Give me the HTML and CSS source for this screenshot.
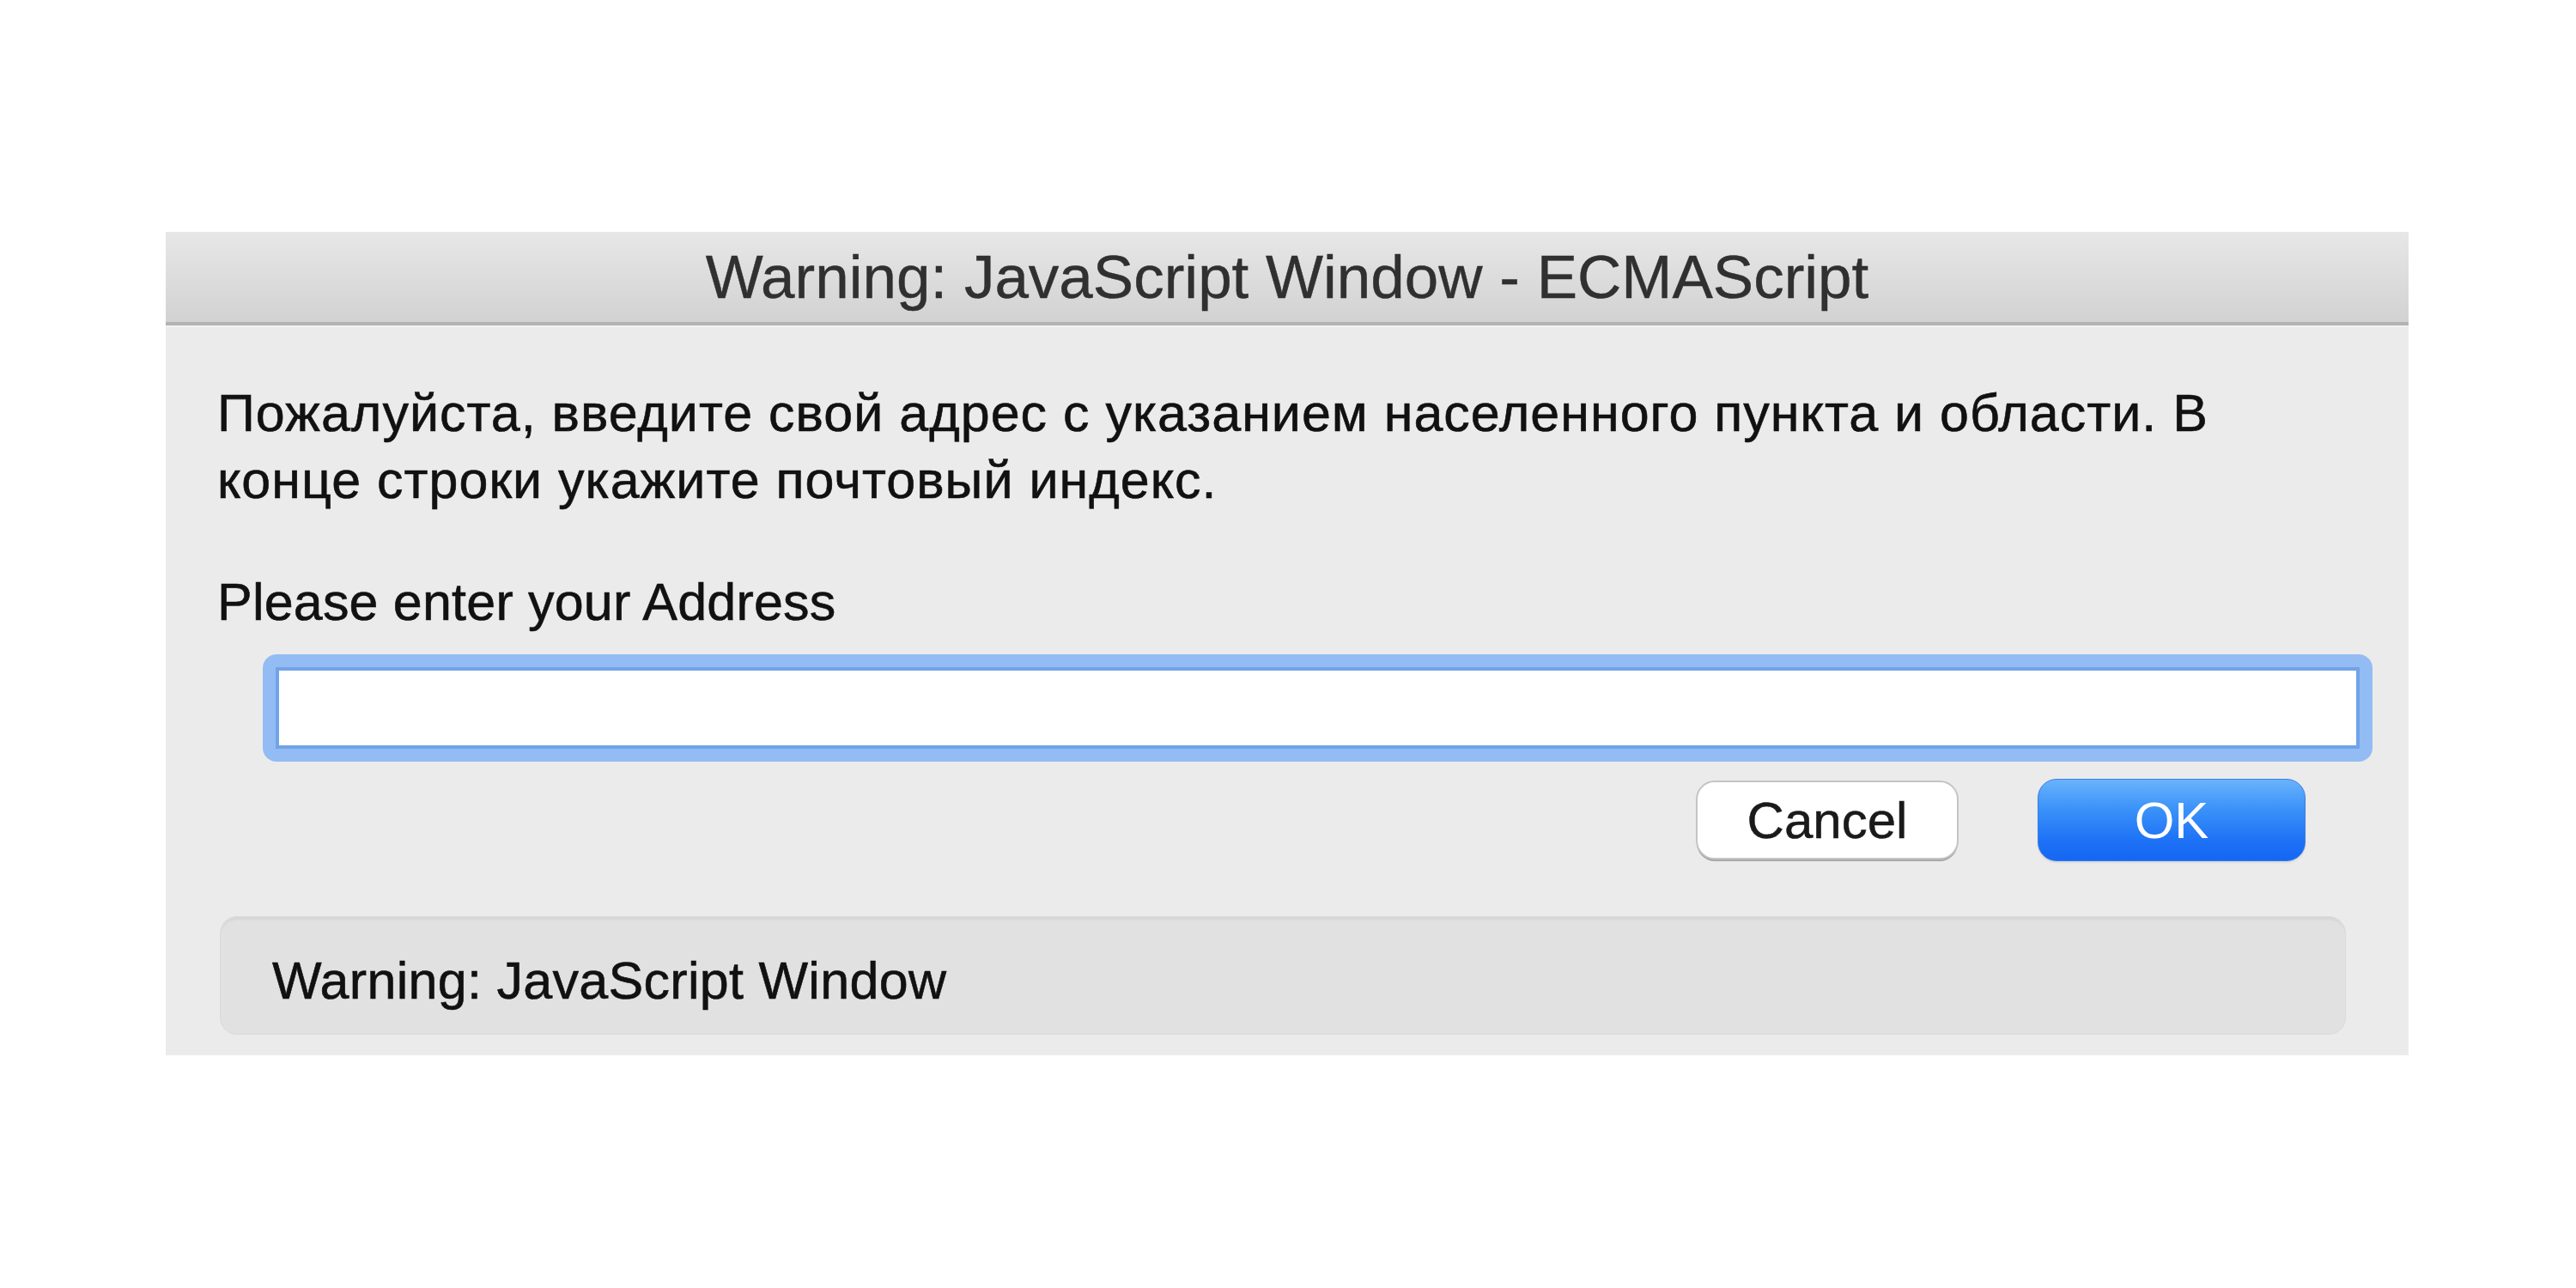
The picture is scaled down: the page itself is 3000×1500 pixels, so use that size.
FILE: index.html
```html
<!DOCTYPE html>
<html lang="ru">
<head>
<meta charset="utf-8">
<title>Warning: JavaScript Window - ECMAScript</title>
<link rel="stylesheet" href="styles.css">
</head>
<body>
<div class="dialog">
  <div class="titlebar">Warning: JavaScript Window - ECMAScript</div>
  <div class="content">
    <p class="message">Пожалуйста, введите свой адрес с указанием населенного пункта и области. В<br>конце строки укажите почтовый индекс.</p>
    <p class="label">Please enter your Address</p>
    <div class="field"><input class="input" type="text" value=""></div>
    <div class="buttons">
      <button class="btn cancel">Cancel</button>
      <button class="btn ok">OK</button>
    </div>
    <div class="status">Warning: JavaScript Window</div>
  </div>
</div>
</body>
</html>
```
FILE: styles.css
```css
html, body {
  margin: 0;
  padding: 0;
  background: #ffffff;
}
body {
  padding: 270px 0 0 193px;
  font-family: "Liberation Sans", Arial, sans-serif;
}
.dialog {
  width: 2612px;
  background: #ebebeb;
  display: flex;
  flex-direction: column;
}
.titlebar {
  height: 105px;
  line-height: 105px;
  text-align: center;
  font-size: 71px;
  color: #303030;
  background: linear-gradient(#e7e7e7, #d2d2d2);
  border-bottom: 4px solid #b2b2b2;
  box-shadow: 0 2px 0 #f1f1f1;
  -webkit-text-stroke: 0.4px #303030;
}
.content {
  padding: 63px 42px 24px 60px;
  display: flex;
  flex-direction: column;
}
.message, .label {
  margin: 0;
  font-size: 61px;
  line-height: 78px;
  color: #111111;
  -webkit-text-stroke: 0.6px #111111;
}
.message {
  letter-spacing: 1px;
}
.label {
  margin-top: 64px;
  letter-spacing: 0.2px;
}
.field {
  margin: 22px 0 0 53px;
  padding: 15px;
  background: #92bcf3;
  border-radius: 16px;
  display: flex;
}
.input {
  flex: 1;
  height: 87px;
  box-sizing: content-box;
  padding: 0;
  margin: 0;
  border: 4px solid #71a3e6;
  background: #ffffff;
  outline: none;
  font-family: inherit;
  font-size: 61px;
}
.buttons {
  margin-top: 20px;
  height: 96px;
  display: flex;
  justify-content: flex-end;
  align-items: center;
  gap: 92px;
  padding-right: 78px;
}
.btn {
  font-family: inherit;
  font-size: 60px;
  padding: 0;
  margin: 0;
  box-sizing: border-box;
  border-radius: 22px;
  cursor: default;
}
.cancel {
  width: 306px;
  height: 92px;
  background: #ffffff;
  color: #1a1a1a;
  border: 2px solid #c4c4c4;
  box-shadow: 0 3px 0 -1px #a9a9a9;
  -webkit-text-stroke: 0.5px #1a1a1a;
}
.ok {
  width: 312px;
  height: 96px;
  color: #ffffff;
  border: 1px solid #3a7de6;
  background: linear-gradient(#6ab3fc 0%, #3c93f9 35%, #1e72f6 75%, #1566f3 100%);
  box-shadow: 0 2px 2px rgba(0, 0, 0, 0.08);
}
.status {
  margin: 64px 31px 0 3px;
  height: 138px;
  box-sizing: border-box;
  padding: 35px 0 0 60px;
  font-size: 61px;
  line-height: 78px;
  letter-spacing: 0.3px;
  color: #111111;
  -webkit-text-stroke: 0.6px #111111;
  background: #e1e1e1;
  border: 1px solid #dadada;
  border-radius: 20px;
  box-shadow: inset 0 5px 3px -2px rgba(0, 0, 0, 0.05);
}
```
